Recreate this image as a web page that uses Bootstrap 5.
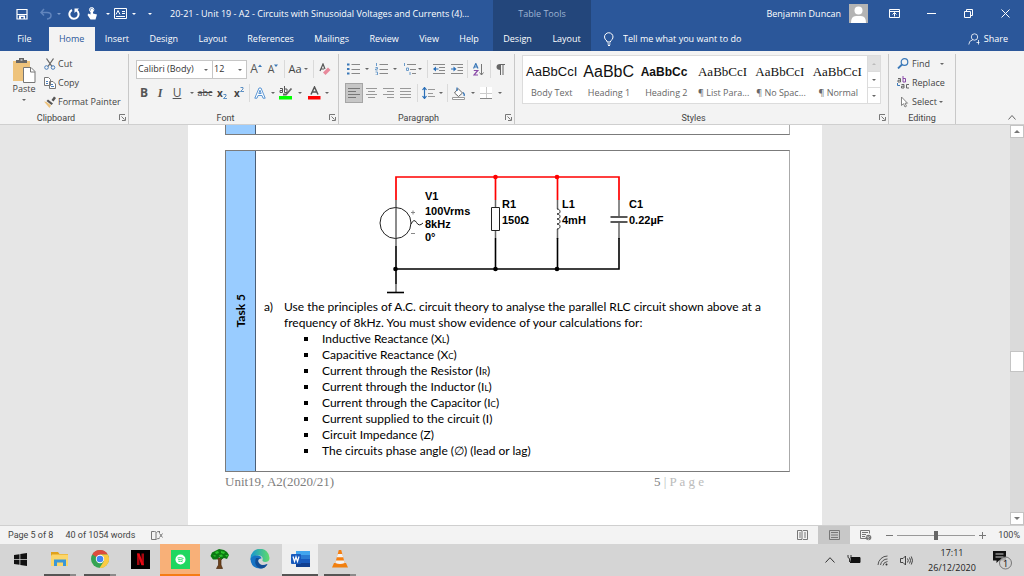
<!DOCTYPE html>
<html lang="en">
<head>
<meta charset="utf-8">
<meta name="viewport" content="width=device-width, initial-scale=1">
<title>20-21 - Unit 19 - A2 - Circuits with Sinusoidal Voltages and Currents (4)</title>
<link href="https://cdn.jsdelivr.net/npm/bootstrap@5.3.0/dist/css/bootstrap.min.css" rel="stylesheet">
<style>
  :root { --word: #2b579a; --word-dark: #23467b; --line: #c8c8c8; --ink: #444; }
  body { font: 9px/12px "Open Sans", "Noto Sans", sans-serif; color: var(--ink); height: 100vh; overflow: hidden; }
  svg { display: block; flex: none; }
  button { border: 0; background: none; padding: 0; color: inherit; font: inherit; display: flex; align-items: center; justify-content: center; white-space: nowrap; flex: none; }

  /* header */
  .app-head { display: grid; grid-template-columns: auto auto 1fr; grid-template-rows: 27px 24px; background: var(--word); color: #fff; }
  .ctx { background: var(--word-dark); }
  .ctx-name { color: #9fb4d3; }
  .doc-title { padding-left: 12px; white-space: nowrap; }
  .tab-link { color: #fff; text-decoration: none; height: 24px; padding: 0 10px; display: flex; align-items: center; justify-content: center; flex: 1 1 auto; }
  .tab-link.active { background: #f3f3f3; color: var(--word); }
  .tab-file { padding: 0 17px; }
  .tabs-main { width: 493px; padding-right: 4px; }
  .tabs-ctx { width: 98px; }
  .tell { background: none; border: 0; color: #fff; width: 160px; padding: 0; outline: 0; }
  .tell::placeholder { color: #fff; opacity: 1; }
  .win-btn { width: 37px; height: 26px; }

  /* ribbon */
  .ribbon { background: #f3f3f3; border-bottom: 1px solid #cfcfcf; height: 74px; }
  .grp { border-right: 1px solid var(--line); margin: 3px 0 0; height: 70px; display: flex; flex-direction: column; flex: none; }
  .grp-body { height: 58px; }
  .grp-name { height: 12px; display: flex; align-items: center; position: relative; justify-content: center; font-family: Roboto, sans-serif; }
  .launch { position: absolute; right: 2px; top: 2px; }
  .g-clip { width: 129px; } .g-font { width: 210px; } .g-para { width: 176px; } .g-edit { width: 67px; }
  .g-font .grp-body, .g-para .grp-body { padding: 3px 0 0 7px; }
  .g-styles { max-width: 374px; }
  .g-styles .grp-body { padding: 1px 7px 0; }
  .tool-row { display: flex; align-items: center; height: 24px; }
  .line-btn { height: 19px; justify-content: flex-start; gap: 2px; }
  .w8 { width: 8px; } .w12 { width: 12px; } .w14 { width: 14px; } .w16 { width: 16px; } .w18 { width: 18px; } .w20 { width: 20px; }
  .vr-thin { width: 1px; height: 18px; background: #dadada; margin: 0 3px; flex: none; }
  .dd::after { content: ""; border: 2px solid transparent; border-top-color: #666; border-bottom: 0; }
  .dd.light::after { border-top-color: #fff; }
  .dd.faint::after { border-top-color: #7d9ccb; }
  .combo { position: relative; border: 1px solid #c6c6c6; background: #fff; height: 19px; display: flex; align-items: center; flex: none; width: 77px; }
  .combo-size { width: 34px; }
  .combo select { appearance: none; border: 0; background: transparent; font: inherit; width: 100%; padding: 0 1px; color: #333; outline: 0; }
  .combo.dd::after { position: absolute; right: 4px; top: 8px; pointer-events: none; }
  .glyph { font-size: 12px; color: #555; }
  .g-bold { font-weight: 700; }
  .script-x { font-size: 10px; font-weight: 700; }
  .case-aa { font-size: 11px; }
  .al-on { background: #c6c6c6; outline: 1px solid #a5a5a5; height: 18px; }
  .gallery { background: #fff; border: 1px solid #dcdcdc; height: 49px; display: flex; overflow: hidden; }
  .sty { flex: 1 1 0; min-width: 0; flex-direction: column; overflow: hidden; padding: 6px 3px 0; justify-content: flex-start; color: #666; }
  .sty-eg { color: #111; height: 20px; line-height: 20px; width: 100%; text-align: left; display: block; margin-bottom: 5px; font-size: 13px; }
  .eg-sans { font-family: "Liberation Sans", Arial, sans-serif; }
  .eg-serif { font-family: "Liberation Serif", "Times New Roman", serif; }
  .eg-h1 { font-size: 16px; } .eg-h2 { font-size: 12px; font-weight: 700; }
  .gal-nav { width: 13px; border-left: 1px solid #dcdcdc; flex: none; }
  .gal-nav button { flex: 1; border-bottom: 1px solid #dcdcdc; width: 100%; }
  .gal-nav .spent { background: #e1e1e1; }
  .spent::after { content: ""; border: 2px solid transparent; border-bottom-color: #bbb; border-top: 0; }

  /* document */
  .desk { background: #e6e6e6; min-height: 0; }
  .sheet { width: 634px; max-width: 100%; background: #fff; padding: 0 32px 0 37px; color: #000; overflow: hidden; }
  .cell-row { border: 1px solid #7b7b7b; border-right-color: #aaa; display: flex; }
  .side { width: 30px; background: #9cf; border-right: 1px solid #4b5f77; flex: none; display: flex; align-items: center; justify-content: center; }
  .side b { writing-mode: vertical-rl; transform: rotate(180deg); }
  .prev-row { height: 10px; border-top: 0; margin-bottom: 15px; }
  .task { height: 322px; }
  .calibri { font-family: Lato, "Open Sans", sans-serif; font-size: 12px; }
  .circuit { margin: 16px 0 0 114px; }
  .intro, .asks { line-height: 16px; }
  .asks li { display: flex; align-items: center; gap: 14px; white-space: pre; height: 16px; }
  .asks li::before { content: ""; width: 4px; height: 4px; background: #000; flex: none; }
  .low { font-size: 8px; line-height: 8px; }
  .foot { font: 13px/20px "Liberation Serif", "Times New Roman", serif; color: #808080; }
  .foot-page { color: #bbb; width: 136px; white-space: pre; }
  .foot-num { color: #808080; }
  .vbar { width: 14px; background: #dadada; }
  .vbar button { background: #fff; border: 1px solid #c4c4c4; width: 14px; height: 13px; }
  .vbar .thumb { height: 21px; }
  .up::after { content: ""; border: 3px solid transparent; border-bottom-color: #777; border-top: 0; }
  .down::after { content: ""; border: 3px solid transparent; border-top-color: #777; border-bottom: 0; }

  /* status bar */
  .status { height: 19px; background: #f3f3f3; border-top: 1px solid #cfcfcf; font-family: Roboto, sans-serif; }
  .view-on { background: #c8c8c8; }
  .view-btn { width: 32px; height: 18px; }
  .zoomer { appearance: none; width: 78px; height: 10px; margin: 0 4px; background: linear-gradient(#999, #999) center / 100% 1px no-repeat; }
  .zoomer::-webkit-slider-thumb { appearance: none; width: 4px; height: 9px; background: #666; }

  /* taskbar */
  .taskbar { height: 32px; background: #d5d5d5; color: #222; }
  .app-btn { width: 40px; height: 32px; border-bottom: 2px solid transparent; }
  .app-btn.run { background: linear-gradient(90deg, #555 80%, #8b8b8b 80%) center bottom / 32px 2px no-repeat border-box; }
  .app-btn.alert-on { background: #f8b078; border-bottom-color: #f57c14; }
  .app-btn.front { background: linear-gradient(#555, #555) center bottom / 36px 2px no-repeat border-box, linear-gradient(#efefef, #efefef) center / 36px 100% no-repeat border-box; }
  .clock { width: 64px; line-height: 15px; text-align: center; }
  .notes { margin: 0 12px 0 8px; }
</style>
</head>
<body class="d-flex flex-column m-0">

<svg width="0" height="0" class="position-absolute" aria-hidden="true">
  <symbol id="launcher" viewBox="0 0 7 7"><path d="M.5 6V.5H6M2.500 2.500l3 3M6.500 3v3.500H3" fill="none" stroke="#777"/></symbol>
</svg>

<header class="app-head">
  <div class="d-flex align-items-center">
    <button class="ms-3" aria-label="Save"><svg width="12" height="12" viewBox="0 0 12 12"><path d="M1 1.500h10v9.500H1zM1 6.500h10" fill="none" stroke="#fff" stroke-width="1.200"/><path d="M3 7.500h6v3.500H7.500V9H5v2H3z" fill="#fff"/></svg></button>
    <button class="ms-2 ps-1" aria-label="Undo"><svg width="12" height="12" viewBox="0 0 12 12"><path d="M4 1L1 4.500l3 3M1 4.500h6q4 0 4 3T7 11" fill="none" stroke="#6185bd" stroke-width="1.500"/></svg></button>
    <button class="w14 dd faint" aria-label="Undo list"></button>
    <button class="w16" aria-label="Repeat"><svg width="12" height="12" viewBox="0 0 12 12"><path d="M8.500 2.300A4.600 4.600 0 1 1 4 2" fill="none" stroke="#fff" stroke-width="2"/><path d="M6.500 5V.5H11z" fill="#fff"/></svg></button>
    <button class="w20" aria-label="Touch mode"><svg width="11" height="13" viewBox="0 0 11 13"><path d="M3.500 1.500v6L1.500 6.500.5 8l3 4.500h5l1.500-5-4-1v-5z" fill="#fff"/><circle cx="4.700" cy="2.700" r="2.200" fill="none" stroke="#fff"/></svg></button>
    <button class="w12 dd light" aria-label="Touch mode list"></button>
    <button class="w12" aria-label="Form"><svg width="13" height="11" viewBox="0 0 13 11"><path d="M.5.5h12v10H.5zM8 3.500h3M8 5.500h3M2 8.500h9" fill="none" stroke="#fff"/><path d="M2 6.500l2-4 2 4" fill="none" stroke="#fff"/></svg></button>
    <button class="w16 dd light" aria-label="Form list"></button>
    <button class="w16 dd light" aria-label="Customise toolbar"></button>
    <span class="doc-title">20-21 - Unit 19 - A2 - Circuits with Sinusoidal Voltages and Currents (4)...</span>
  </div>
  <div class="ctx ctx-name d-flex align-items-center justify-content-center">Table Tools</div>
  <div class="d-flex align-items-center justify-content-end">
    <span class="me-2">Benjamin Duncan</span>
    <svg width="19" height="19" viewBox="0 0 19 19" class="me-2"><path d="M0 0h19v19H0z" fill="#b4b4b4"/><circle cx="9.500" cy="6.500" r="4" fill="#fff"/><path d="M2 19q0-7 5-7h5q5 0 5 7z" fill="#fff"/></svg>
    <button class="win-btn" aria-label="Ribbon display options"><svg width="11" height="9" viewBox="0 0 11 9"><path d="M.5.5h10v8H.5zM.5 2.500h10M5.500 7.500v-4M3.500 5.500l2-2 2 2" fill="none" stroke="#fff"/></svg></button>
    <button class="win-btn" aria-label="Minimise"><svg width="9" height="9"><path d="M0 4.500h9" stroke="#fff"/></svg></button>
    <button class="win-btn" aria-label="Restore"><svg width="9" height="9" viewBox="0 0 9 9"><path d="M.5 2.500h6v6h-6zM2.500 2.500v-2h6v6h-2" fill="none" stroke="#fff"/></svg></button>
    <button class="win-btn" aria-label="Close"><svg width="9" height="9" viewBox="0 0 9 9"><path d="M.5.5l8 8M8.500.5l-8 8" stroke="#fff"/></svg></button>
  </div>
  <nav class="tabs-main d-flex">
    <a href="#" class="tab-link tab-file">File</a><a href="#" class="tab-link active">Home</a><a href="#" class="tab-link">Insert</a><a href="#" class="tab-link">Design</a><a href="#" class="tab-link">Layout</a><a href="#" class="tab-link">References</a><a href="#" class="tab-link">Mailings</a><a href="#" class="tab-link">Review</a><a href="#" class="tab-link">View</a><a href="#" class="tab-link">Help</a>
  </nav>
  <nav class="tabs-ctx ctx d-flex">
    <a href="#" class="tab-link">Design</a><a href="#" class="tab-link">Layout</a>
  </nav>
  <div class="d-flex align-items-center ps-2">
    <label for="tell" class="ms-1 me-2"><svg width="12" height="14" viewBox="0 0 12 14"><path d="M4 10V9Q1.500 7.500 1.500 5a4.200 4.200 0 0 1 8.500 0Q10 7.500 7.500 9v1zM4.500 12h3M5 13.500h2" fill="none" stroke="#fff"/></svg></label>
    <input id="tell" class="tell" type="text" placeholder="Tell me what you want to do">
    <button class="ms-auto me-3 gap-1"><svg width="12" height="12" viewBox="0 0 12 12"><circle cx="6.500" cy="4" r="3.200" fill="none" stroke="#fff" stroke-width=".8"/><path d="M.8 11.500Q1 7.500 4.500 7M10.500 7v4.500M8.500 9.500h3" fill="none" stroke="#fff" stroke-width=".8"/></svg>Share</button>
  </div>
</header>

<section class="ribbon d-flex" aria-label="Ribbon">
  <div class="grp g-clip">
    <div class="grp-body d-flex">
      <button class="flex-column justify-content-start ps-2 pt-1 ms-1">
        <svg width="24" height="25" viewBox="0 0 24 25"><path d="M1 3h17v20H1z" fill="#eec37c"/><path d="M4 5V2h3V0h5v2h3v3z" fill="#666"/><path d="M8.500 1.500h2v1h-2z" fill="#fff"/><path d="M11.500 9.500H19l4 4v11H11.500z" fill="#fff" stroke="#777"/><path d="M18.500 9.500v4.500H23" fill="none" stroke="#777"/></svg>
        <span>Paste</span><span class="dd d-flex mt-1"></span>
      </button>
      <div class="ps-2">
        <button class="line-btn"><svg width="12" height="12" viewBox="0 0 12 12"><path d="M2.500.5l5.500 8M9.500.5L4 8.500" stroke="#666" stroke-width="1.300"/><circle cx="2.500" cy="9.500" r="1.800" fill="none" stroke="#4a7ebb"/><circle cx="9" cy="9.500" r="1.800" fill="none" stroke="#4a7ebb"/></svg>Cut</button>
        <button class="line-btn"><svg width="12" height="12" viewBox="0 0 12 12"><path d="M.5.5h4l2 2v6h-6zM5.500 4.500H9l2.500 2.500v4.500h-6z" fill="#fff" stroke="#777"/><path d="M2 4.500h2M2 6.500h2M7 7.500h2M7 9.500h3" stroke="#4a7ebb"/></svg>Copy</button>
        <button class="line-btn"><svg width="12" height="12" viewBox="0 0 12 12"><path d="M7.500 4L10 .5l2 1.500-2.500 3.500z" fill="#555"/><path d="M4 3.500l5 4-1.500 1.500-5-4z" fill="#555"/><path d="M0 5.500l2.500.5L7 9.500 5.500 12z" fill="#eec37c"/></svg>Format Painter</button>
      </div>
    </div>
    <div class="grp-name"><span class="pe-3">Clipboard</span><button class="launch" aria-label="Clipboard settings"><svg width="7" height="7"><use href="#launcher"/></svg></button></div>
  </div>

  <div class="grp g-font">
    <div class="grp-body">
      <div class="tool-row">
        <div class="combo dd"><select aria-label="Font"><option>Calibri (Body)</option></select></div>
        <div class="combo combo-size dd border-start-0"><select aria-label="Font size"><option>12</option></select></div>
        <button class="w18 glyph" aria-label="Grow font">A<svg width="4" height="10" viewBox="0 0 4 10"><path d="M0 3l2-2.500L4 3z" fill="#3a78b8"/></svg></button>
        <button class="w16 glyph" aria-label="Shrink font"><small>A</small><svg width="4" height="10" viewBox="0 0 4 10"><path d="M0 .5l2 2.500L4 .5z" fill="#3a78b8"/></svg></button>
        <span class="vr-thin"></span>
        <button class="w14 case-aa" aria-label="Change case">Aa</button><button class="w8 dd" aria-label="Case list"></button>
        <span class="vr-thin"></span>
        <button class="w16" aria-label="Clear formatting"><svg width="12" height="13" viewBox="0 0 12 13"><path d="M1 8l3-7 2 5M2 6h3" fill="none" stroke="#555" stroke-width="1.200"/><path d="M4 9.500L9 4.500l2.500 2.500-5 5z" fill="#e8899b"/></svg></button>
      </div>
      <div class="tool-row">
        <button class="w16 glyph g-bold">B</button><button class="w16 glyph eg-serif"><i><b>I</b></i></button><button class="w18 glyph"><u>U</u></button><button class="w12 dd" aria-label="Underline list"></button>
        <button class="w14"><s>abc</s></button>
        <button class="w20 script-x" aria-label="Subscript">x<svg width="4" height="12" viewBox="0 0 4 12"><path d="M.5 7.500h2.500v1.500L.5 11.500H4" fill="none" stroke="#3a78b8" stroke-width=".8"/></svg></button>
        <button class="w14 script-x" aria-label="Superscript">x<svg width="4" height="12" viewBox="0 0 4 12"><path d="M.5.500h2.500v1.500L.5 4.500H4" fill="none" stroke="#3a78b8" stroke-width=".8"/></svg></button>
        <span class="vr-thin"></span>
        <button class="w14" aria-label="Text effects"><svg width="12" height="12" viewBox="0 0 12 12"><path d="M.8 11.200L5 1h2l4.200 10.200H9L8 8.500H4L3 11.200zM4.800 6.500h2.400L6 3.200z" fill="#fff" stroke="#4a8bd0" stroke-width=".9"/></svg></button><button class="w12 dd" aria-label="Effects list"></button>
        <button class="w14" aria-label="Highlight"><svg width="14" height="14" viewBox="0 0 14 14"><path d="M1 2.500h2.500v4H1V4.500h2.500M5.500 0v6.500H8V3H5.500" fill="none" stroke="#555"/><path d="M12.500 2.500L7 8.500H4" stroke="#666" stroke-width="1.800" fill="none"/><path d="M0 10h13v3.500H0z" fill="#0f0"/></svg></button><button class="w14 dd" aria-label="Highlight list"></button>
        <button class="w14" aria-label="Font colour"><svg width="13" height="14" viewBox="0 0 13 14"><path d="M3 8.500l3.500-7.500L10 8.500M4 6h5" fill="none" stroke="#555" stroke-width="1.500"/><path d="M0 10h12.500v3.500H0z" fill="#f00"/></svg></button><button class="w12 dd" aria-label="Font colour list"></button>
      </div>
    </div>
    <div class="grp-name"><span class="pe-3">Font</span><button class="launch" aria-label="Font settings"><svg width="7" height="7"><use href="#launcher"/></svg></button></div>
  </div>

  <div class="grp g-para">
    <div class="grp-body">
      <div class="tool-row">
        <button class="w14" aria-label="Bullets"><svg width="13" height="12" viewBox="0 0 13 12"><path d="M4.500 1.500H13M4.500 6.500H13M4.500 10.500H13" stroke="#888"/><path d="M0 .5h2.500v2H0zM0 5h2.500v2H0zM0 9.500h2.500v2H0z" fill="#3a78b8"/></svg></button><button class="w14 dd" aria-label="Bullet list"></button>
        <button class="w14" aria-label="Numbering"><svg width="13" height="12" viewBox="0 0 13 12"><path d="M4.500 1.500H13M4.500 6.500H13M4.500 10.500H13" stroke="#888"/><path d="M1.500 0v3M.5 4.500h2v1.500h-2v1h2M.5 9h2v3h-2" stroke="#6c9ccb" fill="none"/></svg></button><button class="w14 dd" aria-label="Number list"></button>
        <button class="w14" aria-label="Multilevel list"><svg width="13" height="12" viewBox="0 0 13 12"><path d="M4 1.500h9M7 6.500h6M9 10.500h4" stroke="#888"/><path d="M1.500 0v3M3.500 5h2v2.500h-2zM7 9v3" stroke="#6c9ccb" fill="none"/></svg></button><button class="w8 dd" aria-label="Multilevel choices"></button>
        <span class="vr-thin"></span>
        <button class="w16" aria-label="Decrease indent"><svg width="12" height="11" viewBox="0 0 12 11"><path d="M0 .5h12M6 3.500h6M6 6.500h6M0 9.500h12" stroke="#888"/><path d="M0 5l3-2.500v2h2.500v1H3v2z" fill="#2a6fb8"/></svg></button>
        <button class="w20" aria-label="Increase indent"><svg width="12" height="11" viewBox="0 0 12 11"><path d="M0 .5h12M6.500 3.500H12M6.500 6.500H12M0 9.500h12" stroke="#888"/><path d="M5.500 5l-3-2.500v2H0v1h2.500v2z" fill="#2a6fb8"/></svg></button>
        <span class="vr-thin ms-0"></span>
        <button class="w16" aria-label="Sort"><svg width="12" height="13" viewBox="0 0 12 13"><path d="M.5 5.500L2.800.5 5 5.500M1.300 4h3" fill="none" stroke="#3a78b8" stroke-width="1.200"/><path d="M.8 7.500h4L1 12h4" fill="none" stroke="#8a4ba8" stroke-width="1.200"/><path d="M8.500 1v11M6.500 9.500l2 2.500 2-2.500" fill="none" stroke="#777"/></svg></button>
        <span class="vr-thin"></span>
        <button class="w12" aria-label="Show marks"><svg width="9" height="11" viewBox="0 0 9 11"><path d="M4.500 0v6Q.5 6 .5 3T4 0z" fill="#666"/><path d="M4.500 0v11M7 0v11M4 .500h5" stroke="#666"/></svg></button>
      </div>
      <div class="tool-row">
        <button class="w16 al-on" aria-label="Align left"><svg width="12" height="12" viewBox="0 0 12 12"><path d="M0 1.500h12M0 4.500h8M0 7.500h12M0 10.500h8" stroke="#777"/></svg></button>
        <button class="w18" aria-label="Centre"><svg width="11" height="12" viewBox="0 0 11 12"><path d="M0 1.500h11M2 4.500h7M0 7.500h11M2 10.500h7" stroke="#999"/></svg></button>
        <button class="w16" aria-label="Align right"><svg width="11" height="12" viewBox="0 0 11 12"><path d="M0 1.500h11M4 4.500h7M0 7.500h11M4 10.500h7" stroke="#999"/></svg></button>
        <button class="w18" aria-label="Justify"><svg width="11" height="12" viewBox="0 0 11 12"><path d="M0 1.500h11M0 4.500h11M0 7.500h11M0 10.500h11" stroke="#999"/></svg></button>
        <span class="vr-thin"></span>
        <button class="w14" aria-label="Line spacing"><svg width="13" height="12" viewBox="0 0 13 12"><path d="M6 2.500h7M6 6.500h5M6 9.500h7" stroke="#999"/><path d="M2.500.5v11M.5 3l2-2.500 2 2.500M.5 9l2 2.500 2-2.500" fill="none" stroke="#2a6fb8" stroke-width="1.200"/></svg></button><button class="w12 dd" aria-label="Spacing list"></button>
        <span class="vr-thin ms-0"></span>
        <button class="w16" aria-label="Shading"><svg width="14" height="13" viewBox="0 0 14 13"><path d="M6 1.500L10.500 6 6.500 9.500 2.500 6z" fill="#fff" stroke="#666"/><path d="M5 4V.5M11 5.500q2 2 1 3.500" fill="none" stroke="#3a78b8" stroke-width="1.300"/><path d="M.5 10.500h12v2H.5z" fill="#fff" stroke="#999"/></svg></button><button class="w12 dd" aria-label="Shading list"></button>
        <button class="w14" aria-label="Borders"><svg width="12" height="12" viewBox="0 0 12 12"><path d="M0 0h12v12H0z" fill="#fff"/><path d="M0 6.500h12M6.500 0v12" stroke="#ccc"/><path d="M0 11.500h12" stroke="#888"/></svg></button><button class="w14 dd" aria-label="Border list"></button>
      </div>
    </div>
    <div class="grp-name"><span class="pe-3">Paragraph</span><button class="launch" aria-label="Paragraph settings"><svg width="7" height="7"><use href="#launcher"/></svg></button></div>
  </div>

  <div class="grp g-styles flex-grow-1">
    <div class="grp-body"><div class="gallery">
      <button class="sty"><span class="sty-eg eg-sans">AaBbCcI</span>Body Text</button>
      <button class="sty"><span class="sty-eg eg-sans eg-h1">AaBbC</span>Heading 1</button>
      <button class="sty"><span class="sty-eg eg-sans eg-h2">AaBbCc</span>Heading 2</button>
      <button class="sty"><span class="sty-eg eg-serif">AaBbCcI</span>¶ List Para...</button>
      <button class="sty"><span class="sty-eg eg-serif">AaBbCcI</span>¶ No Spac...</button>
      <button class="sty"><span class="sty-eg eg-serif">AaBbCcI</span>¶ Normal</button>
      <div class="gal-nav d-flex flex-column"><button class="spent" aria-label="Previous styles"></button><button class="dd" aria-label="Next styles"></button><button class="dd border-bottom-0" aria-label="More styles"></button></div>
    </div></div>
    <div class="grp-name"><span class="pe-3">Styles</span><button class="launch" aria-label="Styles settings"><svg width="7" height="7"><use href="#launcher"/></svg></button></div>
  </div>

  <div class="grp g-edit">
    <div class="grp-body ps-2">
      <button class="line-btn"><svg width="13" height="11" viewBox="0 0 13 11"><circle cx="7.500" cy="4" r="3.300" fill="none" stroke="#3a78b8" stroke-width="1.200"/><path d="M5 6.500L1 10.500" stroke="#3a78b8" stroke-width="1.800"/></svg>Find<span class="dd d-flex ms-1 ps-1"></span></button>
      <button class="line-btn"><svg width="13" height="13" viewBox="0 0 13 13"><path d="M1 2.500h2.500v3.500H1V4.200h2.500" fill="none" stroke="#666"/><path d="M6 0v6h2.500V2.500H6" fill="none" stroke="#8a4ba8"/><path d="M.5 7v2.500H3" fill="none" stroke="#3a78b8"/><path d="M4.500 8.500H7V12H4.500v-1.800H7M12 8.500H9.500V12H12" fill="none" stroke="#666"/></svg>Replace</button>
      <button class="line-btn"><svg width="13" height="12" viewBox="0 0 13 12"><path d="M4.500 1v8.500l2-1.800 1.500 3.300 1.500-.8-1.500-3h2.500z" fill="#fff" stroke="#777" stroke-width=".9"/></svg>Select<span class="dd d-flex"></span></button>
    </div>
    <div class="grp-name">Editing</div>
  </div>
  <button class="ms-auto align-self-end pe-2 mb-1" aria-label="Collapse ribbon"><svg width="8" height="5" viewBox="0 0 8 5"><path d="M.5 4.500l3.500-4 3.500 4" fill="none" stroke="#666"/></svg></button>
</section>

<main class="desk d-flex flex-grow-1">
  <div class="flex-grow-1 d-flex justify-content-center">
    <article class="sheet">
      <div class="cell-row prev-row"><div class="side"></div></div>
      <div class="cell-row task">
        <div class="side calibri"><b>Task 5</b></div>
        <div class="flex-grow-1 calibri">
          <svg class="circuit" width="310" height="132" viewBox="370 167 310 132" font-family="Liberation Sans, Arial, sans-serif" font-weight="700" font-size="11" role="img" aria-label="Parallel RLC circuit">
            <g fill="none" stroke="#222">
              <path d="M396 200v46M495.500 200v38M557.500 200v9M557.500 229v10M619 200v16M619 223v16M396 284v8" stroke="#666" stroke-width="1.500"/>
              <circle cx="395.500" cy="223" r="15.500"/>
              <path d="M411 224q3-6 5.500-1.500T423 223"/>
              <path d="M411 212.500h4M413 210.500v4M411 233.500h4" stroke="#888"/>
              <path d="M491.500 207.500h8v23h-8z" fill="#fff"/>
              <path d="M557 209c4 0 4 5 0 5c4 0 4 5 0 5c4 0 4 5 0 5c4 0 4 5 0 5"/>
              <path d="M610.500 217h17M610.500 222h17" stroke-width="1.600"/>
              <path d="M396 246v38M396 269h223v-31M495.500 238v31M557.500 238v31" stroke="#000" stroke-width="1.600"/>
              <path d="M387 292.500h17" stroke="#000" stroke-width="1.600"/>
              <path d="M396 200v-23h223v23M495.500 177v23M557.500 177v23" stroke="#f00" stroke-width="1.700"/>
            </g>
            <g fill="#f00"><circle cx="495.500" cy="177" r="2.300"/><circle cx="557" cy="177" r="2.300"/></g>
            <circle cx="395.500" cy="269" r="2.300"/><circle cx="495.500" cy="269" r="2.300"/><circle cx="557" cy="269" r="2.300"/>
            <text x="425" y="200">V1</text><text x="425" y="215">100Vrms</text><text x="425" y="228">8kHz</text><text x="425" y="241">0°</text>
            <text x="502" y="208">R1</text><text x="502" y="224">150Ω</text><text x="562" y="208">L1</text><text x="562" y="224">4mH</text><text x="629" y="208">C1</text><text x="629" y="224">0.22µF</text>
          </svg>
          <div class="intro d-flex ps-2"><span class="w20 flex-shrink-0">a)</span><span class="text-nowrap">Use the principles of A.C. circuit theory to analyse the parallel RLC circuit shown above at a<br>frequency of 8kHz. You must show evidence of your calculations for:</span></div>
          <ul class="asks list-unstyled mb-0 ps-5">
            <li><span>Inductive Reactance (X<span class="low">L</span>)</span></li>
            <li><span>Capacitive Reactance (X<span class="low">C</span>)</span></li>
            <li><span>Current through the Resistor (I<span class="low">R</span>)</span></li>
            <li><span>Current through the Inductor (I<span class="low">L</span>)</span></li>
            <li><span>Current through the Capacitor (I<span class="low">C</span>)</span></li>
            <li><span>Current supplied to the circuit (I)</span></li>
            <li><span>Circuit Impedance (Z)</span></li>
            <li><span>The circuits phase angle (∅) (lead or lag)</span></li>
          </ul>
        </div>
      </div>
      <div class="foot d-flex justify-content-between"><span>Unit19, A2(2020/21)</span><span class="foot-page"><span class="foot-num">5</span> | P a g e</span></div>
    </article>
  </div>
  <div class="vbar d-flex flex-column">
    <button class="up" aria-label="Scroll up"></button>
    <button class="thumb mt-auto" style="margin-bottom:140px" aria-label="Scroll position"></button>
    <button class="down" aria-label="Scroll down"></button>
  </div>
</main>

<footer class="status d-flex align-items-center">
  <span class="ms-1 ps-1">Page 5 of 8</span><span class="ms-2 ps-1">40 of 1054 words</span>
  <button class="ms-3" aria-label="Proofing"><svg width="12" height="9" viewBox="0 0 12 9"><path d="M.5.5h3q1.500 0 1.500 1v7H.5zM5.500 8.500q0-1 3-1M5.500 1.500q0-1 3-1M8.500 2.500l3 4M11.500 2.500l-3 4M8.500 0v2" fill="none" stroke="#777"/></svg></button>
  <button class="view-btn ms-auto" aria-label="Read mode"><svg width="11" height="10" viewBox="0 0 11 10"><path d="M.5.500h4.500v9H.5zM6 .5h4.500v9H6M2 3h2M2 5h2M2 7h2M7 3h2M7 5h2M7 7h2" fill="none" stroke="#777"/></svg></button>
  <button class="view-btn view-on" aria-label="Print layout"><svg width="11" height="10" viewBox="0 0 11 10"><path d="M.5.5h10v9H.5zM2 2.500h7M2 5h7M2 7.500h7" fill="none" stroke="#777"/></svg></button>
  <button class="view-btn" aria-label="Web layout"><svg width="12" height="11" viewBox="0 0 12 11"><path d="M6 8.500H.5V.5h9v3M2 2.500h6M2 4.500h4M2 6.500h3" fill="none" stroke="#777"/><circle cx="8.500" cy="7.500" r="2.800" fill="#777"/><path d="M6.500 6.500l2 1 1-1.500M8 10l1-1.500" stroke="#eee" fill="none" stroke-width=".7"/></svg></button>
  <button class="ms-1" aria-label="Zoom out"><svg width="7" height="7"><path d="M0 3.500h7" stroke="#777"/></svg></button>
  <input class="zoomer" type="range" min="10" max="190" value="100" aria-label="Zoom">
  <button aria-label="Zoom in"><svg width="7" height="7"><path d="M0 3.500h7M3.500 0v7" stroke="#777"/></svg></button>
  <span class="ms-2 ps-1 me-1">100%</span>
</footer>

<nav class="taskbar d-flex align-items-center" aria-label="Taskbar">
  <button class="app-btn" aria-label="Start"><svg width="13" height="13" viewBox="0 0 13 13"><path d="M0 2l5.500-.8V6H0zM6.300 1L13 0v6H6.300zM0 6.800h5.500v4.900L0 11zM6.300 6.800H13V13l-6.700-1z" fill="#111"/></svg></button>
  <button class="app-btn run" aria-label="File Explorer"><svg width="18" height="16" viewBox="0 0 18 16"><path d="M0 1h7l1.500 2H17v12H0z" fill="#e0a21b"/><path d="M1 3.500h16V15H0V5z" fill="#fbd66b"/><path d="M3 15V8.500h12V15h-3v-3.500H6V15z" fill="#3a97d8"/></svg></button>
  <button class="app-btn run" aria-label="Chrome"><svg width="18" height="18" viewBox="0 0 18 18"><circle cx="9" cy="9" r="9" fill="#34a353"/><path d="M9 9L1.200 4.500A9 9 0 0 1 16.800 4.500H9z" fill="#dd4b3e"/><path d="M9 4.500h7.800A9 9 0 0 1 8.500 18L13 11z" fill="#fbcb43"/><circle cx="9" cy="9" r="4.200" fill="#fff"/><circle cx="9" cy="9" r="3.300" fill="#4285f4"/></svg></button>
  <button class="app-btn" aria-label="Netflix"><svg width="19" height="19" viewBox="0 0 19 19"><path d="M0 0h19v19H0z"/><path d="M6 3.500h2.500V15H6zM10.500 3.500H13V15h-2.500z" fill="#a5060f"/><path d="M6 3.500h2.500L13 15.300h-2.500z" fill="#e50914"/></svg></button>
  <button class="app-btn alert-on" aria-label="Spotify"><svg width="19" height="19" viewBox="0 0 19 19"><path d="M0 0h19v19H0z" fill="#1fd760"/><circle cx="9.500" cy="9.500" r="5" fill="#fff"/><path d="M6.500 8q3-1 6 .5M7 9.800q2.500-.8 5 .4M7.500 11.500q2-.6 4 .3" fill="none" stroke="#1fd760" stroke-width=".9"/></svg></button>
  <button class="app-btn" aria-label="Family tree"><svg width="20" height="20" viewBox="0 0 20 20"><path d="M8.500 9L5 7.500 8.500 11v5L6.500 19.500h6L11 16v-5l4-4-4 2z" fill="#6d431c" stroke="#4a2a10" stroke-width=".7"/><path d="M5 2L9 0l5 1 3 2 2 3-2 4-3-1-3 1.500L9.500 8 6.500 10.500 3 10.500.5 7 2 3.500z" fill="#0c7a12"/><path d="M5 3l3-1 1 2-3 1zM11 2l4 1-1 2-3-1zM3 6l3 .5L5 8zM9 6l3-.5 1 2-3 .5zM15 6l3 0-1 2z" fill="#2cc42d"/></svg></button>
  <button class="app-btn" aria-label="Edge"><svg width="20" height="20" viewBox="0 0 20 20"><defs><linearGradient id="edge-top"><stop stop-color="#1695d2"/><stop offset="1" stop-color="#5fdc6a"/></linearGradient></defs><path d="M.5 9.500A9.500 9.500 0 0 1 19.500 9q0 4-4.500 4-3 0-2.500-2Q13.500 7 9 6.500 3 6.500.5 11z" fill="url(#edge-top)"/><path d="M.5 10Q2.500 6 8 6.500q3.500.5 3.500 3Q7 10 8.500 13.500q2.500 4.500 9 1.500Q15 19.500 10 19.500 1 19 .5 10z" fill="#1673c4"/><path d="M6 9q-2 5 1 8.500 2 2 4 2 4 0 6.500-4.500-8 3-9.500-3Q8 9.500 10 9z" fill="#124e95"/></svg></button>
  <button class="app-btn front" aria-label="Word"><svg width="19" height="18" viewBox="0 0 19 18"><path d="M5 1h14v4.500H5z" fill="#41a5ee"/><path d="M5 5h14v4H5z" fill="#2b7cd3"/><path d="M5 9h14v4H5z" fill="#185abd"/><path d="M5 13h14v4H5z" fill="#103f91"/><rect y="4" width="10" height="10" rx="1" fill="#185abd"/><path d="M2 6.500l1.500 5L5 7l1.500 4.500L8 6.500" fill="none" stroke="#fff" stroke-width="1.200"/></svg></button>
  <button class="app-btn run" aria-label="VLC"><svg width="16" height="18" viewBox="0 0 16 18"><path d="M2 13h12l2 4.500H0z" fill="#f08010"/><path d="M6.800 0h2.400L13 14q-5 2.500-10 0z" fill="#f57f12"/><path d="M5.700 4h4.600l.9 3.200H4.800zM3.900 10.500h8.200l.6 2.500Q8 15 3.300 13z" fill="#f4f4f4"/></svg></button>

  <button class="ms-auto w20" aria-label="Hidden icons"><svg width="10" height="6" viewBox="0 0 10 6"><path d="M.5 5.500L5 .7l4.500 4.800" fill="none" stroke="#333"/></svg></button>
  <button class="w20 ms-1" aria-label="Battery"><svg width="14" height="10" viewBox="0 0 14 10"><path d="M4 2.500h9v5H3" fill="#111" stroke="#111"/><path d="M1 0v2.500q1.500 2 3 0V0M2.500 4v3" fill="none" stroke="#333"/></svg></button>
  <button class="w20 ms-2" aria-label="Wi-Fi"><svg width="11" height="11" viewBox="0 0 11 11"><path d="M1 10A9.500 9.500 0 0 1 10.500 1M3.500 10A7 7 0 0 1 10.500 4M6 10.500Q6.500 7 10.500 6.500" fill="none" stroke="#444" stroke-width=".9"/><circle cx="9.500" cy="9.500" r="1" fill="#333"/></svg></button>
  <button class="w20 ms-1" aria-label="Volume"><svg width="13" height="11" viewBox="0 0 13 11"><path d="M.5 3.500H3L5.500 1v9L3 7.500H.5zM7.500 3.500q1.500 2 0 4M9.500 2.500q2.200 3 0 6M11.300 1.500q2.500 4 0 8" fill="none" stroke="#333" stroke-width=".9"/></svg></button>
  <div class="clock ms-1">17:11<br>26/12/2020</div>
  <button class="notes" aria-label="Notifications"><svg width="20" height="20" viewBox="0 0 20 20"><path d="M1 1h13v9.500H7L4.500 13v-2.500H1z" fill="#111"/><path d="M3.500 4h8M3.500 7h8" stroke="#ccc"/><circle cx="13.500" cy="13" r="6" fill="#d0d0d0" fill-opacity=".8" stroke="#777"/><text x="11" y="16.500" font-size="9">1</text></svg></button>
</nav>

<script src="https://cdn.jsdelivr.net/npm/bootstrap@5.3.0/dist/js/bootstrap.bundle.min.js"></script>
</body>
</html>
